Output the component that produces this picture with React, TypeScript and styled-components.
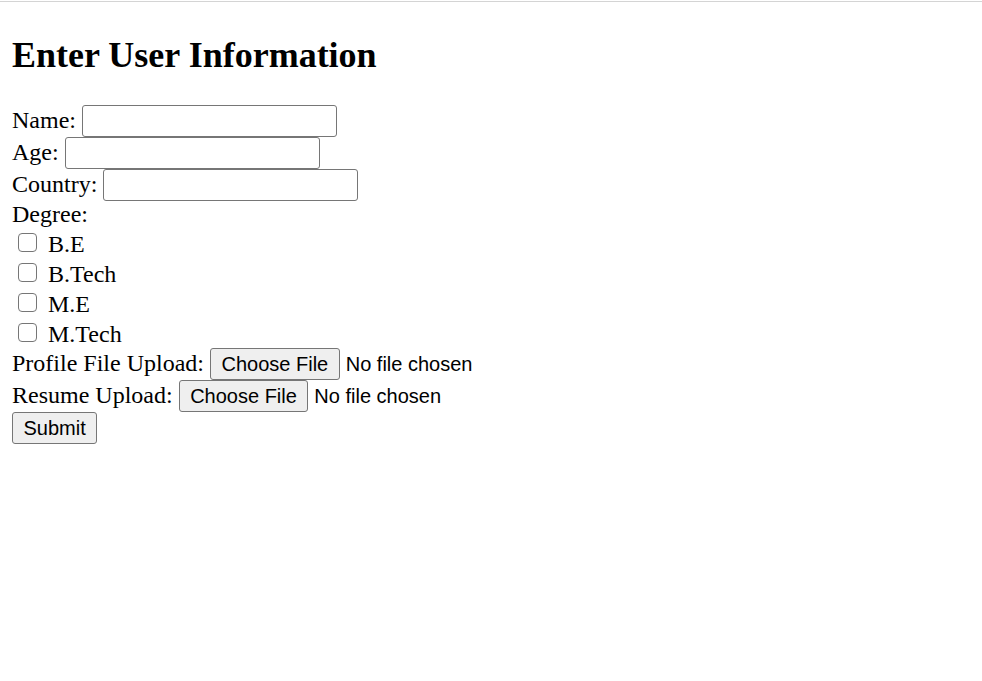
import React from "react";
import styled, { createGlobalStyle } from "styled-components";

const GlobalStyle = createGlobalStyle`
  html, body {
    margin: 0;
    padding: 0;
    background: #ffffff;
  }
  body {
    font-family: "Liberation Serif", "Times New Roman", serif;
    color: #000000;
  }
`;

const TopRule = styled.div`
  margin-top: 1px;
  height: 1px;
  background: #d4d4d4;
`;

const Page = styled.main`
  padding: 0 12px;
`;

const Title = styled.h1`
  margin: 33px 0 30px;
  font-family: "Liberation Serif", "Times New Roman", serif;
  font-size: 36px;
  font-weight: 700;
  line-height: 40px;
`;

const Form = styled.form`
  display: flex;
  flex-direction: column;
  align-items: flex-start;
`;

const Row = styled.div<{ $h: number }>`
  display: flex;
  align-items: center;
  gap: 6px;
  height: ${(p) => p.$h}px;
`;

const Label = styled.label<{ $lift?: boolean }>`
  font-family: "Liberation Serif", "Times New Roman", serif;
  font-size: 24px;
  line-height: 27px;
  white-space: nowrap;
  margin-top: ${(p) => (p.$lift ? "-2px" : "0")};
`;

const TextInput = styled.input`
  box-sizing: border-box;
  width: 255px;
  height: 32px;
  margin: 0;
  padding: 1px 3px;
  border: 1px solid #767676;
  border-radius: 3px;
  background: #ffffff;
  font-family: "Liberation Sans", Arial, sans-serif;
  font-size: 20px;
`;

const CheckRow = styled.label`
  display: flex;
  align-items: center;
  box-sizing: border-box;
  height: 30px;
  padding-top: 2px;
  font-family: "Liberation Serif", "Times New Roman", serif;
  font-size: 24px;
  line-height: 27px;
`;

const Check = styled.input`
  appearance: none;
  box-sizing: border-box;
  width: 19px;
  height: 19px;
  margin: 0 11px 4px 6px;
  border: 1px solid #767676;
  border-radius: 4px;
  background: #ffffff;

  &:checked {
    background: #0075ff;
    border-color: #0075ff;
  }
`;

const Button = styled.button`
  box-sizing: border-box;
  height: 32px;
  margin: 0;
  padding: 0 10.5px;
  border: 1px solid #767676;
  border-radius: 3px;
  background: #efefef;
  color: #000000;
  font-family: "Liberation Sans", Arial, sans-serif;
  font-size: 20px;
  line-height: 30px;
  cursor: pointer;
`;

const FileStatus = styled.span`
  font-family: "Liberation Sans", Arial, sans-serif;
  font-size: 20px;
  line-height: 23px;
  white-space: nowrap;
`;

const HiddenFile = styled.input`
  display: none;
`;

const degrees = ["B.E", "B.Tech", "M.E", "M.Tech"];

function FileField({ id, label }: { id: string; label: string }) {
  const ref = React.useRef<HTMLInputElement>(null);
  const [name, setName] = React.useState<string>("");
  return (
    <Row $h={32}>
      <Label htmlFor={id} $lift>
        {label}
      </Label>
      <Button type="button" onClick={() => ref.current?.click()}>
        Choose File
      </Button>
      <FileStatus>{name || "No file chosen"}</FileStatus>
      <HiddenFile
        id={id}
        ref={ref}
        type="file"
        onChange={(e) => setName(e.target.files?.[0]?.name ?? "")}
      />
    </Row>
  );
}

export default function App() {
  return (
    <>
      <GlobalStyle />
      <TopRule />
      <Page>
        <Title>Enter User Information</Title>
        <Form onSubmit={(e) => e.preventDefault()}>
          <Row $h={32}>
            <Label htmlFor="name" $lift>
              Name:
            </Label>
            <TextInput id="name" type="text" />
          </Row>
          <Row $h={32}>
            <Label htmlFor="age" $lift>
              Age:
            </Label>
            <TextInput id="age" type="text" />
          </Row>
          <Row $h={32}>
            <Label htmlFor="country" $lift>
              Country:
            </Label>
            <TextInput id="country" type="text" />
          </Row>
          <Row $h={27}>
            <Label>Degree:</Label>
          </Row>
          {degrees.map((d) => (
            <CheckRow key={d}>
              <Check type="checkbox" name="degree" value={d} />
              {d}
            </CheckRow>
          ))}
          <FileField id="profile" label="Profile File Upload:" />
          <FileField id="resume" label="Resume Upload:" />
          <Row $h={32}>
            <Button type="submit">Submit</Button>
          </Row>
        </Form>
      </Page>
    </>
  );
}
